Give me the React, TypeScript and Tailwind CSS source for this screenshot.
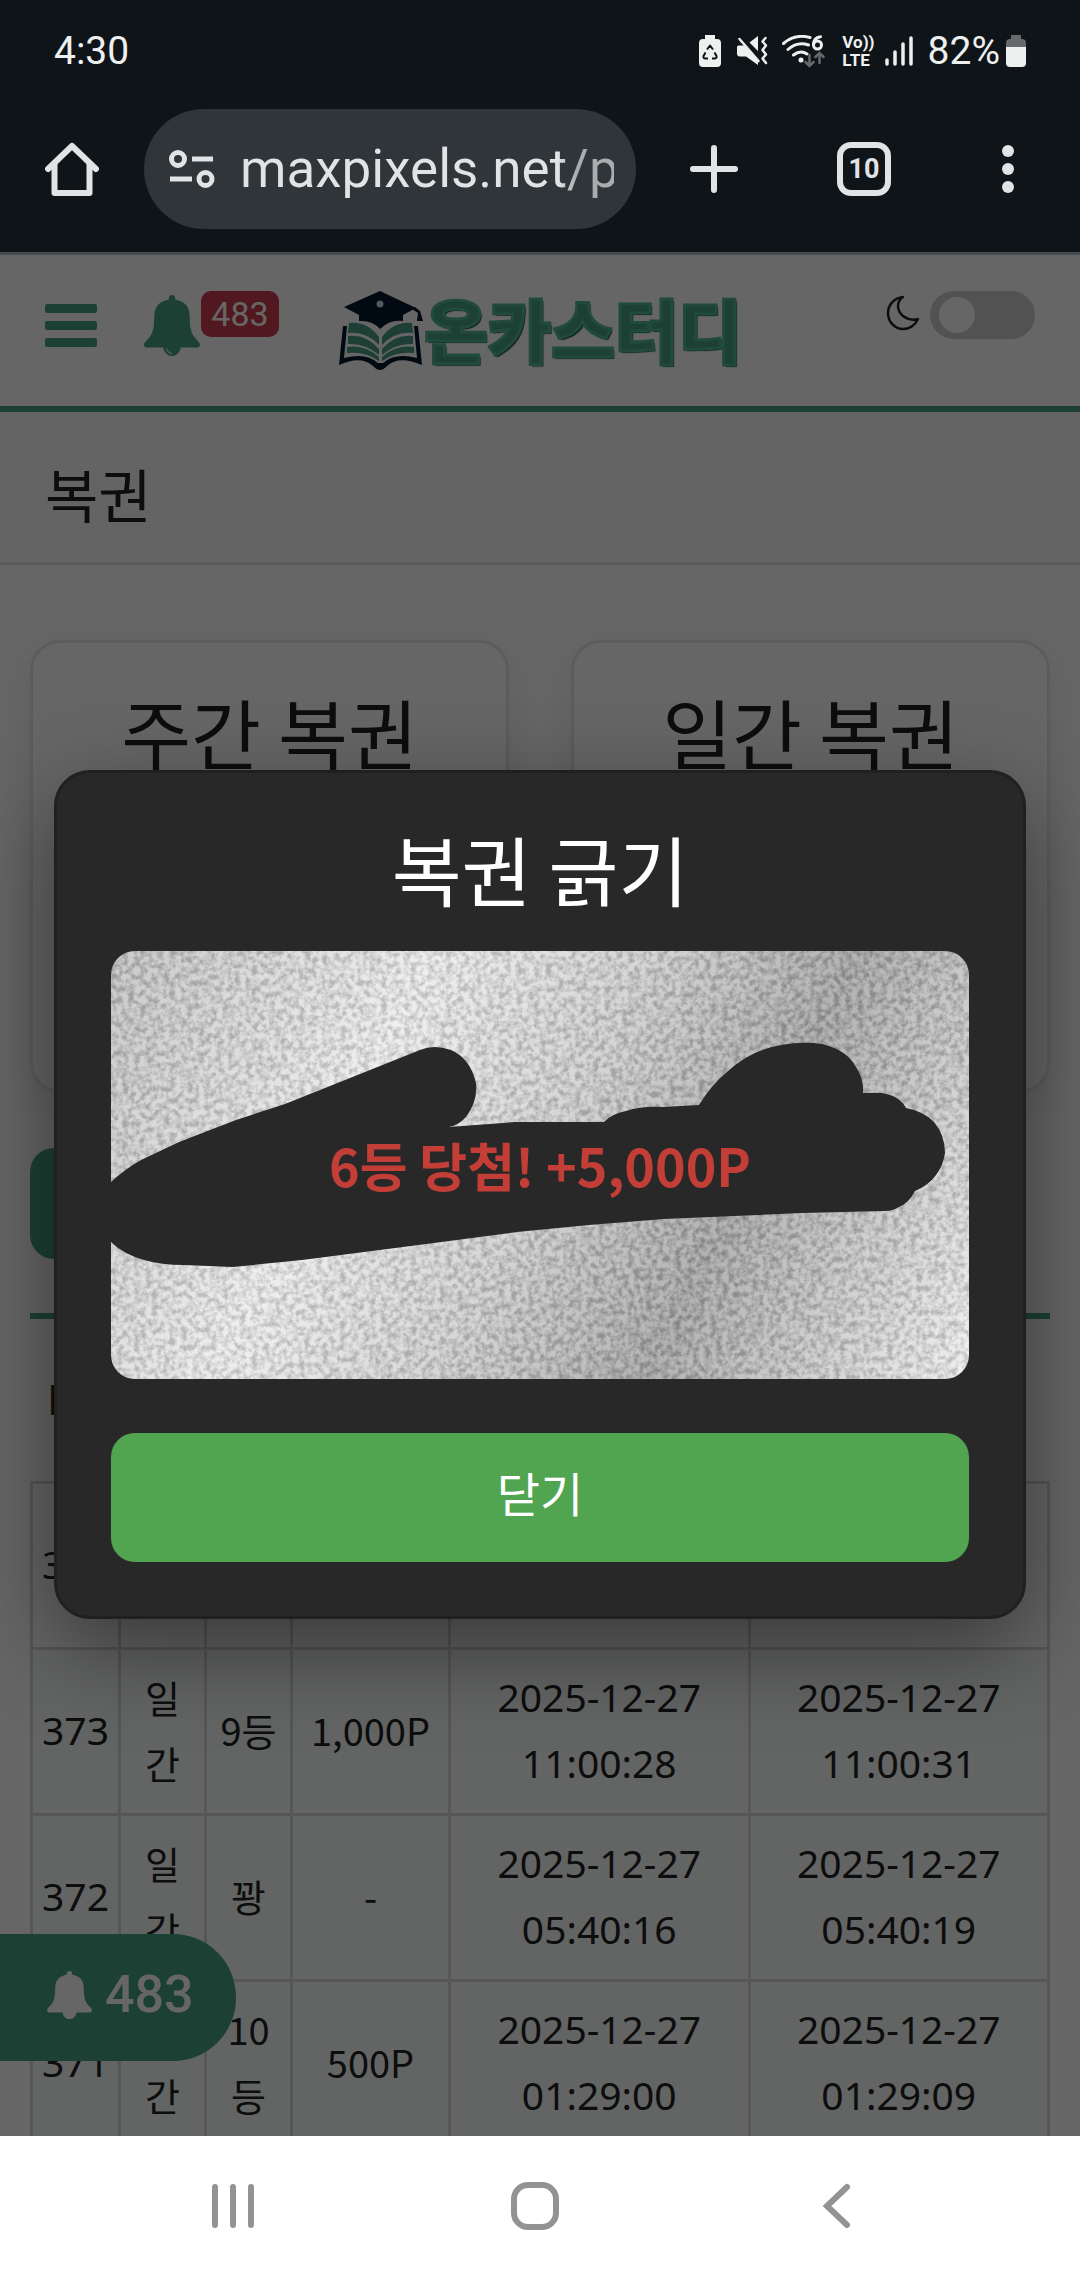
import React, { useState } from "react";

const KR = "font-['Noto_Sans_CJK_KR',sans-serif]";

const rows = [
	{ no: "374", type: ["일", "간"], rank: ["6등"], prize: "5,000P", start: ["2025-12-27", "16:29:50"], end: ["2025-12-27", "16:30:02"] },
	{ no: "373", type: ["일", "간"], rank: ["9등"], prize: "1,000P", start: ["2025-12-27", "11:00:28"], end: ["2025-12-27", "11:00:31"] },
	{ no: "372", type: ["일", "간"], rank: ["꽝"], prize: "-", start: ["2025-12-27", "05:40:16"], end: ["2025-12-27", "05:40:19"] },
	{ no: "371", type: ["일", "간"], rank: ["10", "등"], prize: "500P", start: ["2025-12-27", "01:29:00"], end: ["2025-12-27", "01:29:09"] },
];

function Lines({ items }: { items: string[] }) {
	return (
		<>
			{items.map((item, i) => (
				<span key={i} className="block">{item}</span>
			))}
		</>
	);
}

function BellIcon({ className }: { className: string }) {
	return (
		<svg viewBox="0 0 56 61" preserveAspectRatio="none" className={className} fill="currentColor" aria-hidden="true">
			<path d="M28 0c-2.300 0-3.500 1.700-3.400 4.800C15.500 6.200 10.500 11.500 10.300 21c-.2 10-.7 16-5 21.500C3 45.500 0 47.500 0 50c0 1.700 1.500 2.600 3.500 2.600h49c2 0 3.500-.9 3.500-2.600 0-2.500-3-4.500-5.300-7.500-4.300-5.500-4.800-11.500-5-21.500-.2-9.500-5.200-14.800-14.300-16.200C31.500 1.700 30.300 0 28 0Z" />
			<path d="M19.200 51c0 5.500 3.800 10 8.800 10s8.800-4.500 8.800-10Z" />
			<path d="M22.500 53.500c.6 2.800 2.500 4.400 5 4.800" fill="none" stroke="#fff" strokeOpacity=".7" strokeWidth="1.200" strokeLinecap="round" />
		</svg>
	);
}

function StatusBar() {
	return (
		<div className="flex h-[102px] items-center justify-between px-[54px] text-[#eef0f0] font-['Roboto',sans-serif]">
			<span className="text-[39px] leading-none">4:30</span>
			<div className="flex items-center">
				<svg width="22" height="32" viewBox="0 0 22 32" className="mr-[16px]" aria-hidden="true">
					<path d="M6 0h10v4h2q4 0 4 4v20q0 4-4 4H4q-4 0-4-4V8q0-4 4-4h2Z" fill="#eef0f0" />
					<path d="M8 14.500 11 10.500l3 4M15.500 17.500l2 3.500q.5 2.500-2 2.500h-2.500M6.500 17.500l-2 3.500q-.5 2.500 2 2.500H9" fill="none" stroke="#0f1418" strokeWidth="2" strokeLinejoin="round" />
				</svg>
				<svg width="31" height="30" viewBox="0 0 31 30" className="mr-[14px]" aria-hidden="true">
					<path d="M0 11q0-1.500 1.500-1.500H7L21 25v4L9 20.500H3q-3 0-3-3ZM12.500 6.500 21 0v15Z" fill="#eef0f0" />
					<path d="m2.500 3 19 22" stroke="#eef0f0" strokeWidth="2.500" strokeLinecap="round" />
					<path d="m28.500 2-3 3.500 3.500 4-3.500 4.500 3.500 4.500-3.500 4 3.500 4.500" fill="none" stroke="#eef0f0" strokeWidth="2.500" strokeLinejoin="round" strokeLinecap="round" />
				</svg>
				<svg width="43" height="33" viewBox="0 0 43 33" className="mr-[17px]" aria-hidden="true">
					<g fill="none" stroke="#eef0f0" strokeWidth="3" strokeLinecap="round">
						<path d="M1.500 8.500Q13-1.500 28 2.500M6 14.500q9.500-8.500 20.500-4.500M11.500 20q7-5.500 13.500-1" />
						<path d="M38.500 1.800c-4.500.7-7 3.700-7 8" />
						<circle cx="35.500" cy="10" r="4" />
					</g>
					<circle cx="19" cy="25" r="2.500" fill="#eef0f0" />
					<path d="M27.500 20v11m-4-4 4 4 4-4M37.500 28V18m-4 4 4-4 4 4" fill="none" stroke="#65696c" strokeWidth="2.500" strokeLinecap="round" />
				</svg>
				<div className="mr-[10px] flex flex-col text-[17px] font-bold leading-[18px]">
					<span>Vo))</span>
					<span>LTE</span>
				</div>
				<svg width="28" height="30" viewBox="0 0 28 30" className="mr-[15px]" aria-hidden="true">
					<path d="M2 24v4M10 16v12M18 8v20M26 2v26" stroke="#eef0f0" strokeWidth="3.500" strokeLinecap="round" />
				</svg>
				<span className="mr-[6px] text-[39px] leading-none">82%</span>
				<svg width="20" height="32" viewBox="0 0 20 32" aria-hidden="true">
					<path d="M5 0h10v4h1q4 0 4 4v4H0V8q0-4 4-4h1Z" fill="#65696c" />
					<path d="M0 12h20v16q0 4-4 4H4q-4 0-4-4Z" fill="#eef0f0" />
				</svg>
			</div>
		</div>
	);
}

function BrowserBar() {
	return (
		<div className="flex h-[150px] items-start pl-[45px] pr-[54px] pt-[7px] text-[#e1e3e4] font-['Roboto',sans-serif]">
			<button type="button" aria-label="Home" className="mt-[33px]">
				<svg width="54" height="54" viewBox="0 0 54 54" fill="none" stroke="currentColor" strokeWidth="6" strokeLinecap="round" strokeLinejoin="round">
					<path d="M3 27 27 4l24 23" />
					<path d="M9.500 22v29h35V22" />
				</svg>
			</button>
			<div className="ml-[45px] flex h-[120px] flex-1 items-center rounded-full bg-[#303539] pl-[25px] pr-[22px]">
				<svg width="46" height="38" viewBox="0 0 46 38" fill="none" stroke="currentColor" strokeWidth="5" className="mr-[25px] shrink-0" aria-hidden="true">
					<circle cx="9" cy="9" r="6.500" />
					<circle cx="36.500" cy="29" r="6.500" />
					<path d="M23 9h21M1 29h22" />
				</svg>
				<input
					type="text"
					aria-label="Address"
					readOnly
					value="maxpixels.net/p"
					className="w-full min-w-0 bg-gradient-to-r from-[#e1e3e4] from-85% to-[#a9adb0] to-90% bg-clip-text pt-0.5 text-[53px] text-transparent outline-none"
				/>
			</div>
			<button type="button" aria-label="New tab" className="ml-[54px] mt-9">
				<svg width="48" height="48" viewBox="0 0 48 48" stroke="currentColor" strokeWidth="6" strokeLinecap="round">
					<path d="M24 3v42M3 24h42" />
				</svg>
			</button>
			<button type="button" aria-label="Tabs" className="ml-[99px] mt-[33px] flex size-[54px] items-center justify-center rounded-[14px] border-[6px] border-[#e1e3e4] text-[27px] font-bold leading-none">
				10
			</button>
			<button type="button" aria-label="Menu" className="ml-[99px] mt-9">
				<svg width="36" height="48" viewBox="0 0 36 48" fill="currentColor">
					<circle cx="18" cy="6" r="6" />
					<circle cx="18" cy="24" r="6" />
					<circle cx="18" cy="42" r="6" />
				</svg>
			</button>
		</div>
	);
}

function Logo() {
	return (
		<a href="#" className="flex h-[81px] items-start" aria-label="온카스터디">
			<svg width="86" height="81" viewBox="0 0 86 81" aria-hidden="true">
				<path d="M5 35 1 74q22-10 34 1 7 8 14 0 12-11 35-1L80 35l-4 0 3 32q-22-6-34 5h-5Q28 61 6 67l3-32Z" fill="#031b2e" />
				<path d="M11 32q18-2 30 14v8Q28 40 10 42ZM10 45q18-2 31 13v6Q27 52 10 53ZM9 56q18-3 32 10v4Q27 60 9 62ZM74 32q-18-2-30 14v8q13-14 31-12ZM75 45q-18-2-31 13v6q14-12 31-11ZM76 56q-18-3-32 10v4q14-10 32-8Z" fill="#4a9e84" />
				<path d="M6 16 42 0l36 17-13 7v6Q52 28 42 38 34 29 21 30v-6Z" fill="#031b2e" />
				<path d="m77 16 5 4 3 10h-6l1-8-6-4Z" fill="#031b2e" />
				<circle cx="42" cy="13" r="3.500" fill="#d5dde0" />
			</svg>
			<span className={`text-[69px] font-black leading-[74px] text-[#46a282] [-webkit-text-stroke:3px_#55b896] [text-shadow:2px_2px_1px_#1c5040] ${KR}`}>
				온카스터디
			</span>
		</a>
	);
}

function SiteHeader() {
	const [dark, setDark] = useState(false);
	return (
		<header className="grid h-[157px] grid-cols-[1fr_auto_1fr] items-start border-b-[6px] border-[#46a282] bg-white px-[45px] pt-9">
			<div className="flex items-start text-[#46a282]">
				<button type="button" aria-label="메뉴" className="mt-[13px] flex flex-col gap-2">
					<span className="h-[9px] w-[52px] rounded-xs bg-[#46a282]" />
					<span className="h-[9px] w-[52px] rounded-xs bg-[#46a282]" />
					<span className="h-[9px] w-[52px] rounded-xs bg-[#46a282]" />
				</button>
				<BellIcon className="ml-[47px] mt-1 h-[61px] w-[56px]" />
				<span className="ml-px flex h-[46px] w-[78px] items-center justify-center rounded-[10px] bg-[#cc3e4e] text-[34px] leading-none text-white font-['Roboto',sans-serif]">
					483
				</span>
			</div>
			<Logo />
			<label className="flex items-start justify-end gap-[10px]">
				<svg width="34" height="36" viewBox="0 0 34 36" fill="none" stroke="#222" strokeWidth="2.500" strokeLinejoin="round" className="mt-1" aria-hidden="true">
					<path d="M17 2C8 3 2 10 2 18c0 9 7 16 15 16 7 0 12-4 15-10-11 3-20-5-20-13 0-4 2-7 5-9Z" />
				</svg>
				<input type="checkbox" className="peer sr-only" aria-label="다크 모드" checked={dark} onChange={(e) => setDark(e.target.checked)} />
				<span className="flex h-[48px] w-[105px] items-center rounded-full bg-[#ccc] px-[9px] peer-checked:justify-end">
					<span className="size-9 rounded-full bg-white" />
				</span>
			</label>
		</header>
	);
}

function LottoCard({ title }: { title: string }) {
	return (
		<section className="h-[453px] flex-1 rounded-[30px] border-[3px] border-[#e6e6e6] bg-white pt-[34px] text-center shadow-[0_12px_36px_rgba(0,0,0,0.08)]">
			<h2 className="text-[76px] leading-[108px]">{title}</h2>
		</section>
	);
}

function History() {
	const cell = "border-[3px] border-[#d8d8d8] px-2 pb-[17px] pt-[14px]";
	return (
		<table className="w-full table-fixed border-collapse bg-[#f8fbfa] text-center text-[38px] leading-[66px]">
			<colgroup>
				<col className="w-[88px]" />
				<col className="w-[86px]" />
				<col className="w-[86px]" />
				<col className="w-[158px]" />
				<col />
				<col />
			</colgroup>
			<tbody>
				{rows.map((row, i) => (
					<tr key={row.no} className={i === 0 ? "bg-white" : ""}>
						<td className={`${cell} text-[39px] font-['Noto_Sans',sans-serif]`}>{row.no}</td>
						<td className={cell}><Lines items={row.type} /></td>
						<td className={cell}><Lines items={row.rank} /></td>
						<td className={cell}>{row.prize}</td>
						<td className={`${cell} text-[39px] font-['Noto_Sans',sans-serif]`}><Lines items={row.start} /></td>
						<td className={`${cell} text-[39px] font-['Noto_Sans',sans-serif]`}><Lines items={row.end} /></td>
					</tr>
				))}
			</tbody>
		</table>
	);
}

function ScratchTicket() {
	return (
		<div className="relative grid h-[428px] place-items-center overflow-hidden rounded-[24px]">
			<p className="text-[52px] font-bold leading-none text-[#c43e38]">6등 당첨! +5,000P</p>
			{/* silver coating, the scratched part is cut out by the mask */}
			<svg viewBox="0 0 858 428" preserveAspectRatio="none" className="absolute inset-0 size-full" aria-hidden="true">
				<defs>
					<linearGradient id="silver" gradientUnits="userSpaceOnUse" x1="0" y1="0" x2="858" y2="428">
						<stop offset="0" stopColor="#bebebe" />
						<stop offset=".3" stopColor="#ececec" />
						<stop offset=".5" stopColor="#cecece" />
						<stop offset=".7" stopColor="#a2a2a2" />
						<stop offset="1" stopColor="#efefef" />
					</linearGradient>
					<filter id="grain" x="0" y="0" width="100%" height="100%" colorInterpolationFilters="sRGB">
						<feTurbulence type="fractalNoise" baseFrequency="0.17" numOctaves="3" seed="4" />
						<feColorMatrix values="1 0 0 0 0  1 0 0 0 0  1 0 0 0 0  0 0 0 0 1" />
						<feComponentTransfer>
							<feFuncR type="linear" slope="2.600" intercept="-.65" />
							<feFuncG type="linear" slope="2.600" intercept="-.65" />
							<feFuncB type="linear" slope="2.600" intercept="-.65" />
						</feComponentTransfer>
					</filter>
					<mask id="scratched">
						<rect width="858" height="428" fill="#fff" />
						<path
							fill="#000"
							d="M0 231Q14 218 30 209L68 191 125 169 174 153 254 121 309 99Q323 93 340 99Q359 107 365 132Q367 150 355 166Q348 174 338 176L404 171 493 171Q500 163 515 160Q530 155 552 156L588 154Q600 134 616 121Q640 99 670 94Q691 90 711 93Q736 99 745 116Q753 128 752 142L771 142Q789 145 795 157Q812 160 823 171Q834 184 834 202Q832 215 825 224Q818 234 804 240Q798 252 788 256Q782 260 774 260L691 262 553 268 478 274 406 281 323 292 191 309 122 316 73 314Q50 314 33 309Q12 303 0 291Z"
						/>
					</mask>
				</defs>
				<g mask="url(#scratched)">
					<rect width="858" height="428" fill="url(#silver)" />
					<rect width="858" height="428" filter="url(#grain)" opacity=".18" />
				</g>
			</svg>
		</div>
	);
}

function ScratchModal() {
	return (
		<div role="dialog" aria-label="복권 긁기" className="absolute inset-x-[54px] top-[515px] rounded-[36px] border-[3px] border-[#202020] bg-[#282828] px-[54px] pb-[54px] pt-[41px] text-white shadow-[0_30px_90px_rgba(0,0,0,0.45)]">
			<h2 className="mb-[29px] text-center text-[76px] leading-[108px]">복권 긁기</h2>
			<ScratchTicket />
			<button type="button" className="mt-[54px] h-[129px] w-full rounded-[24px] bg-[#52a550] pb-2.5 text-[47px]">
				닫기
			</button>
		</div>
	);
}

function SystemNav() {
	return (
		<nav className="flex h-[144px] items-center justify-around bg-white pb-1 pl-[82px] pr-[92px] text-[#939393]">
			<button type="button" aria-label="Recents">
				<svg width="48" height="48" viewBox="0 0 48 48" stroke="currentColor" strokeWidth="6" strokeLinecap="round">
					<path d="M6 5v38M24 5v38M42 5v38" />
				</svg>
			</button>
			<button type="button" aria-label="Home">
				<svg width="48" height="48" viewBox="0 0 48 48" fill="none" stroke="currentColor" strokeWidth="6">
					<rect x="3" y="3" width="42" height="42" rx="14" />
				</svg>
			</button>
			<button type="button" aria-label="Back">
				<svg width="48" height="48" viewBox="0 0 48 48" fill="none" stroke="currentColor" strokeWidth="6" strokeLinecap="round">
					<path d="M34 5 14 24l20 19" />
				</svg>
			</button>
		</nav>
	);
}

export default function App() {
	return (
		<div className="flex h-screen flex-col overflow-hidden bg-[#0f1418]">
			<StatusBar />
			<BrowserBar />
			<div className={`relative min-h-0 flex-1 overflow-hidden border-t-[3px] border-[#454b4d] bg-white text-[#222] ${KR}`}>
				<SiteHeader />
				<h1 className="h-[153px] border-b-[3px] border-[#dee0e2] bg-[#fafafa] pl-[45px] text-[58px] leading-[162px]">복권</h1>
				<main className="px-[30px] pt-[75px]">
					<div className="flex gap-[62px]">
						<LottoCard title="주간 복권" />
						<LottoCard title="일간 복권" />
					</div>
					<button type="button" className="mt-[55px] block h-[111px] w-[300px] rounded-[24px] bg-[#46a282] text-[42px] text-white">
						복권 구매
					</button>
					<div className="mt-[54px] border-t-[6px] border-[#46a282]">
						<p className="pb-[6px] pl-[17px] text-[41px] leading-[156px]">No</p>
					</div>
					<History />
				</main>
				<button type="button" className="absolute bottom-[75px] left-0 flex h-[127px] w-[236px] items-center gap-[13px] rounded-r-[63px] bg-[#46a282] pb-1.5 pl-[47px] text-[52px] font-medium text-white font-['Roboto',sans-serif]">
					<BellIcon className="h-[48px] w-[45px]" />
					483
				</button>
				<div className="absolute inset-0 bg-black/60" />
				<ScratchModal />
			</div>
			<SystemNav />
		</div>
	);
}
